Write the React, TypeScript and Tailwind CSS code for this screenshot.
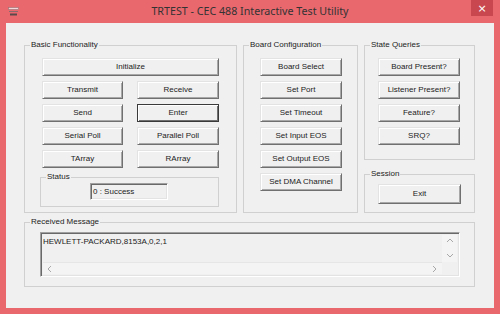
import type { ReactNode } from 'react';

const btn =
  'flex items-center justify-center bg-[#f0f0f0] text-[#222222] text-[8px] leading-none border border-t-[#e3e3e3] border-l-[#e3e3e3] border-r-[#707070] border-b-[#707070] shadow-[inset_1px_1px_0_#ffffff,inset_-1px_-1px_0_#a8a8a8]';
const btnDefault =
  'flex items-center justify-center bg-[#f0f0f0] text-[#222222] text-[8px] leading-none border border-[#3a3a3a] shadow-[inset_1px_1px_0_#ffffff,inset_-1px_-1px_0_#707070]';
const sunken =
  'border border-t-[#a0a0a0] border-l-[#a0a0a0] border-r-[#ffffff] border-b-[#ffffff] shadow-[inset_1px_1px_0_#696969,inset_-1px_-1px_0_#e3e3e3] bg-[#f0f0f0]';

const Group = ({ title, className, children }: { title: string; className: string; children?: ReactNode }) => (
  <fieldset className={`m-0 p-0 min-w-0 border border-[#d0d0d0] ${className}`}>
    <legend className="ml-[5px] px-[1px] text-[8px] leading-[10px] text-[#222222]">{title}</legend>
    {children}
  </fieldset>
);

const Chevron = ({ dir }: { dir: 'up' | 'down' | 'left' | 'right' }) => {
  const d = {
    up: 'M1 5 L4 2 L7 5',
    down: 'M1 2 L4 5 L7 2',
    left: 'M5 1 L2 4 L5 7',
    right: 'M2 1 L5 4 L2 7',
  }[dir];
  return (
    <svg width="8" height="8" viewBox="0 0 8 8">
      <path d={d} fill="none" stroke="#a8a8a8" strokeWidth="1" />
    </svg>
  );
};

export default function App() {
  const basicRows = [
    ['Transmit', 'Receive'],
    ['Send', 'Enter'],
    ['Serial Poll', 'Parallel Poll'],
    ['TArray', 'RArray'],
  ];
  const boardButtons = ['Board Select', 'Set Port', 'Set Timeout', 'Set Input EOS', 'Set Output EOS', 'Set DMA Channel'];
  const stateButtons = ['Board Present?', 'Listener Present?', 'Feature?', 'SRQ?'];

  return (
    <div className="w-[500px] h-[314px] bg-[#e8686e] flex flex-col font-['Liberation_Sans',Arial,sans-serif]">
      {/* Title bar */}
      <div className="h-[23px] flex items-center">
        <div className="w-[60px] pl-[8px] flex items-center">
          <svg width="11" height="9" viewBox="0 0 11 9">
            <rect x="0.5" y="0.5" width="10" height="2" fill="#f3d6d7" stroke="#9a7072" strokeWidth="0.6" />
            <rect x="1" y="4" width="9" height="1" fill="#8a6a6c" />
            <rect x="2" y="6.5" width="7" height="2" fill="#5a4a4c" />
          </svg>
        </div>
        <div className="flex-1 text-center text-[10.7px] text-[#333333] font-['Noto_Sans',sans-serif] leading-none">
          TRTEST - CEC 488 Interactive Test Utility
        </div>
        <div className="w-[60px] pr-[7px] flex justify-end self-start">
          <div className="w-[22px] h-[16px] bg-[#c9484f] flex items-center justify-center text-white text-[11px] leading-none font-['DejaVu_Sans',sans-serif]">
            ×
          </div>
        </div>
      </div>

      {/* Client area */}
      <div className="flex-1 mx-[6px] mb-[6px] bg-[#f0f0f0] pt-[17px] pl-[18px]">
        <div className="flex items-start gap-[6px]">
          <Group title="Basic Functionality" className="w-[213px] h-[173px]">
            <div className="pt-[8px] pl-[17px] flex flex-col gap-[5px]">
              <div className={`${btn} w-[177px] h-[18px]`}>Initialize</div>
              {basicRows.map(([a, b]) => (
                <div key={a} className="flex gap-[14px]">
                  <div className={`${btn} w-[81px] h-[18px]`}>{a}</div>
                  <div className={`${b === 'Enter' ? btnDefault : btn} w-[82px] h-[18px]`}>{b}</div>
                </div>
              ))}
            </div>
            <Group title="Status" className="ml-[15px] mt-[4px] w-[179px] h-[35px]">
              <div className="pt-[1px] pl-[49px]">
                <div className={`${sunken} w-[78px] h-[17px] flex items-center pl-[2px] text-[8px] text-[#222222]`}>0 : Success</div>
              </div>
            </Group>
          </Group>

          <Group title="Board Configuration" className="w-[115px] h-[173px]">
            <div className="pt-[8px] pl-[16px] flex flex-col gap-[5px]">
              {boardButtons.map((t) => (
                <div key={t} className={`${btn} w-[82px] h-[18px]`}>{t}</div>
              ))}
            </div>
          </Group>

          <div className="flex flex-col gap-[9px]">
            <Group title="State Queries" className="w-[111px] h-[120px]">
              <div className="pt-[8px] pl-[13px] flex flex-col gap-[5px]">
                {stateButtons.map((t) => (
                  <div key={t} className={`${btn} w-[82px] h-[18px]`}>{t}</div>
                ))}
              </div>
            </Group>
            <Group title="Session" className="w-[111px] h-[44px]">
              <div className="pt-[5px] pl-[13px]">
                <div className={`${btn} w-[83px] h-[20px]`}>Exit</div>
              </div>
            </Group>
          </div>
        </div>

        <Group title="Received Message" className="mt-[4px] w-[451px] h-[70px]">
          <div className="pt-[5px] pl-[15px]">
            <div className={`${sunken} w-[420px] h-[45px] grid grid-cols-[1fr_15px] grid-rows-[1fr_12px] p-[2px]`}>
              <div className="text-[8px] leading-[10px] text-[#222222] pt-[2px]">HEWLETT-PACKARD,8153A,0,2,1</div>
              <div className="bg-[#f4f4f4] flex flex-col items-center justify-between py-[2px]">
                <Chevron dir="up" />
                <Chevron dir="down" />
              </div>
              <div className="bg-[#f4f4f4] border-t border-[#e6e6e6] flex items-center justify-between px-[3px]">
                <Chevron dir="left" />
                <Chevron dir="right" />
              </div>
              <div className="bg-[#f0f0f0]" />
            </div>
          </div>
        </Group>
      </div>
    </div>
  );
}
